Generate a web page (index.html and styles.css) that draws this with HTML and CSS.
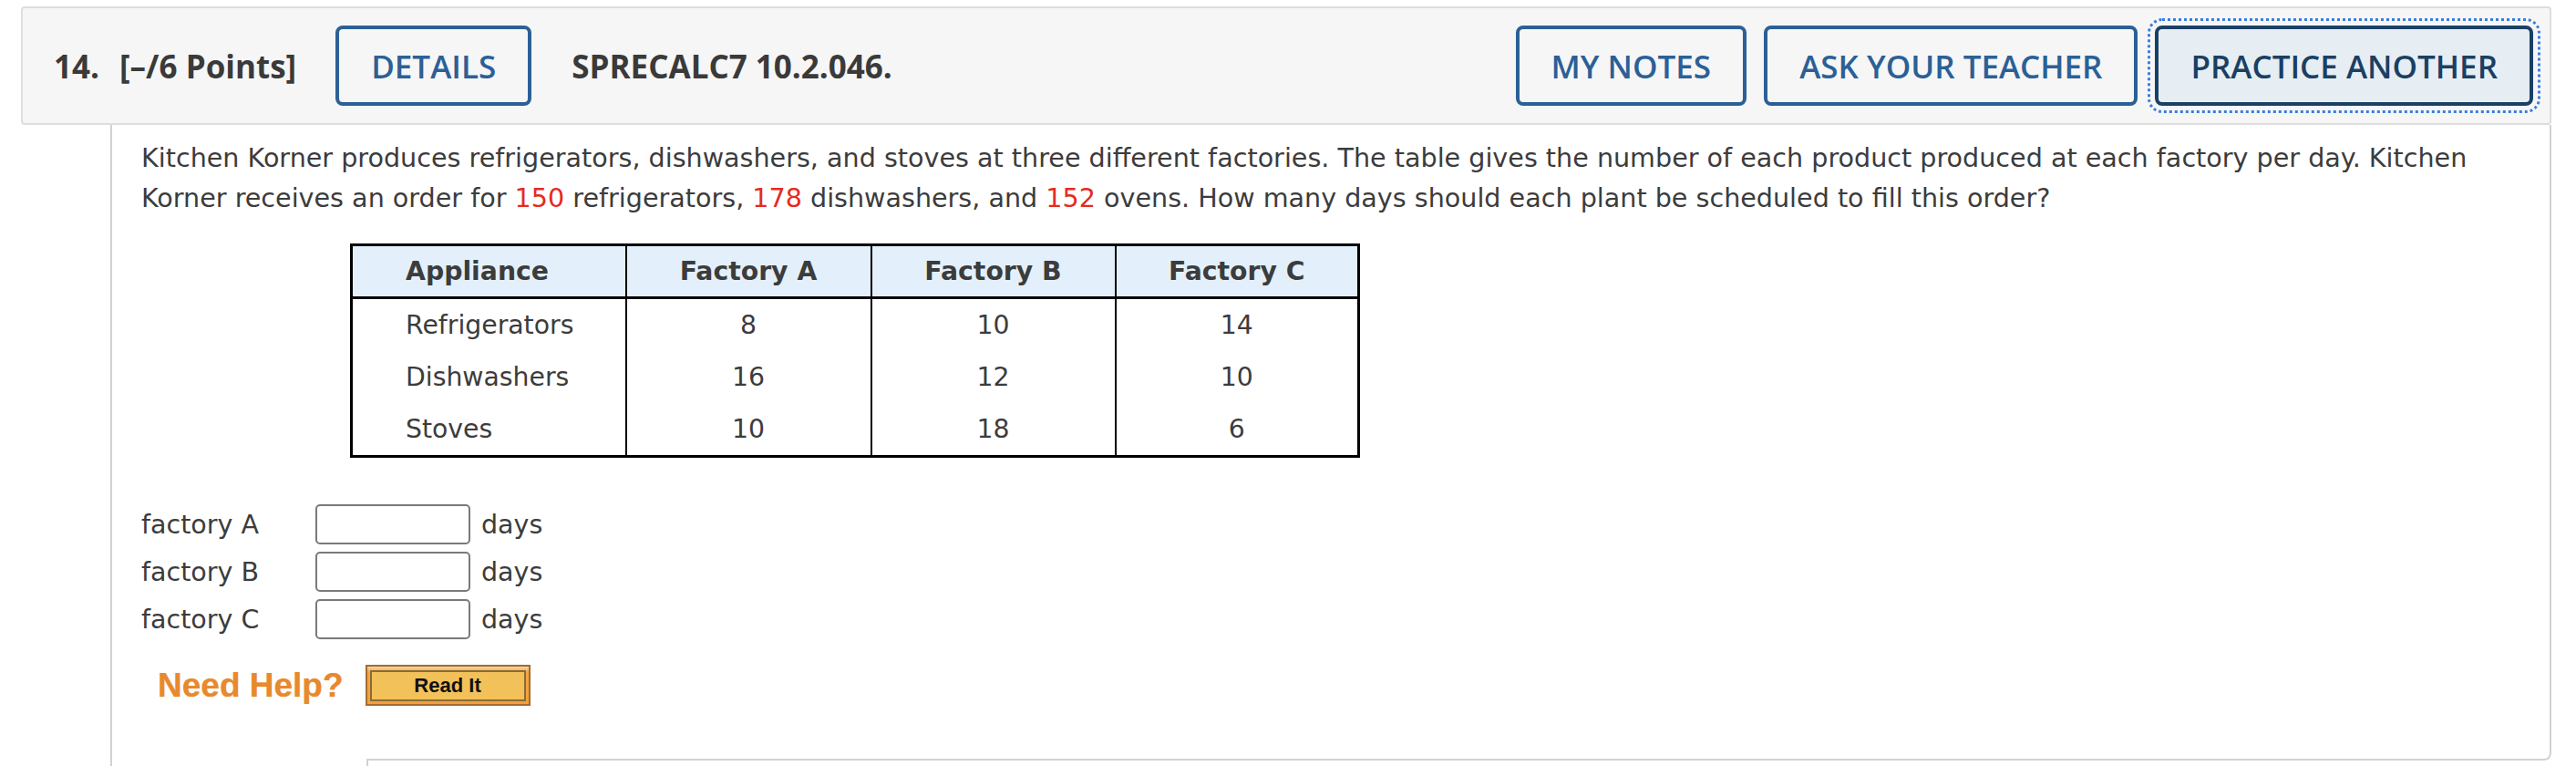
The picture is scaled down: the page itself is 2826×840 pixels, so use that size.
FILE: index.html
```html
<!DOCTYPE html>
<html lang="en">
<head>
<meta charset="utf-8">
<title>Question 14</title>
<link rel="stylesheet" href="styles.css">
</head>
<body>
<div class="page">
  <header class="qhead">
    <div class="qhead-left">
      <span class="qnum">14.</span>
      <span class="qpts">[–/6 Points]</span>
      <button class="btn btn-details">DETAILS</button>
      <span class="qref">SPRECALC7 10.2.046.</span>
    </div>
    <div class="qhead-right">
      <button class="btn">MY NOTES</button>
      <button class="btn">ASK YOUR TEACHER</button>
      <button class="btn btn-focus">PRACTICE ANOTHER</button>
    </div>
  </header>

  <div class="qbox">
    <div class="qbody">
      <p class="prompt">Kitchen Korner produces refrigerators, dishwashers, and stoves at three different factories. The table gives the number of each product produced at each factory per day. Kitchen Korner receives an order for <span class="num">150</span> refrigerators, <span class="num">178</span> dishwashers, and <span class="num">152</span> ovens. How many days should each plant be scheduled to fill this order?</p>

      <table class="data">
        <colgroup>
          <col class="c1"><col class="c2"><col class="c3"><col class="c4">
        </colgroup>
        <thead>
          <tr><th class="first">Appliance</th><th>Factory A</th><th>Factory B</th><th>Factory C</th></tr>
        </thead>
        <tbody>
          <tr><td class="first">Refrigerators</td><td>8</td><td>10</td><td>14</td></tr>
          <tr><td class="first">Dishwashers</td><td>16</td><td>12</td><td>10</td></tr>
          <tr><td class="first">Stoves</td><td>10</td><td>18</td><td>6</td></tr>
        </tbody>
      </table>

      <div class="answers">
        <div class="arow"><span class="alabel">factory A</span><input class="ainput" type="text"><span class="aunit">days</span></div>
        <div class="arow"><span class="alabel">factory B</span><input class="ainput" type="text"><span class="aunit">days</span></div>
        <div class="arow"><span class="alabel">factory C</span><input class="ainput" type="text"><span class="aunit">days</span></div>
      </div>

      <div class="help">
        <span class="help-text">Need Help?</span>
        <span class="readit"><span class="readit-inner">Read It</span></span>
      </div>
    </div>
    <div class="qfoot"></div>
    <div class="next"></div>
  </div>
</div>
</body>
</html>
```

FILE: styles.css
```css
html, body {
  margin: 0;
  padding: 0;
  background: #ffffff;
}

.page {
  padding: 7px 27px 0 23px;
}

/* ---------- header bar ---------- */
.qhead {
  display: flex;
  justify-content: space-between;
  align-items: center;
  box-sizing: border-box;
  height: 130px;
  background: #f6f6f6;
  border: 2px solid #dedede;
  border-radius: 4px;
  padding: 0 18px 0 34px;
  font-family: "Open Sans", "Liberation Sans", sans-serif;
}

.qhead-left,
.qhead-right {
  display: flex;
  align-items: center;
}

.qhead-right {
  gap: 19px;
}

.qnum,
.qpts,
.qref {
  font-size: 35px;
  font-weight: 700;
  color: #3a3a3a;
}

.qnum {
  margin-right: 22px;
}

.qpts {
  margin-right: 43px;
}

.btn {
  box-sizing: border-box;
  height: 88px;
  padding: 0 35px;
  background: #f6f6f6;
  border: 4px solid #2b6096;
  border-radius: 8px;
  color: #2b6096;
  font-family: "Open Sans", "Liberation Sans", sans-serif;
  font-size: 35px;
  font-weight: 600;
  cursor: pointer;
}

.btn-details {
  margin-right: 44px;
}

.btn-focus {
  background: #e6eef3;
  border-color: #1a4066;
  color: #1b3f63;
  outline: 3px dotted #3a7de0;
  outline-offset: 5px;
}

/* ---------- question body ---------- */
.qbox {
  margin-left: 98px;
  border-left: 2px solid #d2d2d2;
  font-family: "DejaVu Sans", Verdana, sans-serif;
  color: #3c3c3c;
}

.qbody {
  border-right: 2px solid #d2d2d2;
  padding: 14px 60px 50px 32px;
}

.prompt {
  margin: 0;
  font-size: 28.6px;
  line-height: 44px;
}

.num {
  color: #e52b20;
}

.data {
  margin: 28px 0 0 229px;
  width: 1105px;
  border-collapse: collapse;
  border: 3px solid #000;
  font-size: 28.3px;
  color: #3c3c3c;
  table-layout: fixed;
}

.c1 { width: 301px; }
.c2 { width: 269px; }
.c3 { width: 268px; }
.c4 { width: 267px; }

.data th {
  height: 55px;
  background: #e3f0fb;
  border-bottom: 3px solid #000;
  border-left: 2px solid #000;
  font-weight: 700;
  text-align: center;
  padding: 0;
}

.data td {
  height: 57px;
  border-left: 2px solid #000;
  text-align: center;
  padding: 0;
}

.data .first {
  text-align: left;
  padding-left: 58px;
}

.answers {
  margin-top: 51px;
}

.arow {
  display: flex;
  align-items: center;
  height: 44px;
  margin-bottom: 8px;
  font-size: 28.5px;
}

.alabel {
  width: 191px;
}

.ainput {
  box-sizing: border-box;
  width: 170px;
  height: 44px;
  margin: 0;
  border: 2px solid #7a7a7a;
  border-radius: 5px;
  background: #fff;
}

.aunit {
  margin-left: 12px;
}

.help {
  display: flex;
  align-items: center;
  gap: 24px;
  margin: 28px 0 0 18px;
}

.help-text {
  font-family: "Liberation Sans", Arial, sans-serif;
  font-size: 37px;
  font-weight: 700;
  color: #e8892e;
  text-shadow: 0 0 1px rgba(232, 137, 46, 0.6);
}

.readit {
  box-sizing: border-box;
  display: flex;
  width: 181px;
  height: 45px;
  padding: 4px 3px 3px 3px;
  border: 2px solid #a36d2a;
  background: linear-gradient(#f6d7a8 0, #f2a646 6px, #f0a040 100%);
}

.readit-inner {
  flex: 1;
  display: flex;
  align-items: center;
  justify-content: center;
  border: 2px solid #8b6a35;
  background: #f3c15a;
  font-family: "Liberation Sans", Arial, sans-serif;
  font-size: 22px;
  font-weight: 700;
  color: #111;
}

.qfoot {
  margin-left: 279px;
  height: 8px;
  border-right: 2px solid #d2d2d2;
  border-bottom: 2px solid #d2d2d2;
  border-bottom-right-radius: 8px;
}

.next {
  margin-left: 279px;
  height: 30px;
  border-left: 2px solid #d2d2d2;
}
```
